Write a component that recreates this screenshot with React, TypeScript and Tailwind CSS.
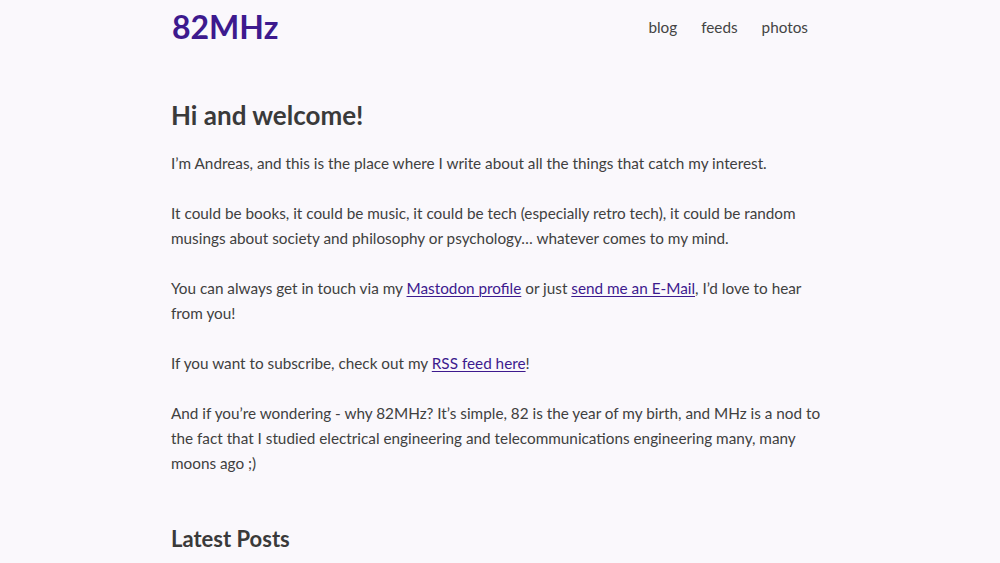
const links = "text-[#3d1a8e] underline underline-offset-2 decoration-1";

export default function App() {
  return (
    <div className="min-h-screen bg-[#faf8fc] text-[#404040] font-['Lato','Noto_Sans',sans-serif]">
      <header className="mx-auto flex max-w-[656px] items-center justify-between pt-[7px]">
        <a href="#" className="text-[32px] font-bold leading-[40px] text-[#3d1a8e]">
          82MHz
        </a>
        <nav className="flex gap-[24px] pr-[20px] text-[15.3px] text-[#444]">
          <a href="#">blog</a>
          <a href="#">feeds</a>
          <a href="#">photos</a>
        </nav>
      </header>

      <main className="mx-auto max-w-[658px] pt-[51px] text-[15.3px] leading-[25px]">
        <h1 className="mb-[19px] text-[26px] font-bold leading-[34px] text-[#3a3a3a]">Hi and welcome!</h1>
        <div className="flex flex-col gap-[25px]">
          <p>I’m Andreas, and this is the place where I write about all the things that catch my interest.</p>
          <p>
            It could be books, it could be music, it could be tech (especially retro tech), it could be random
            musings about society and philosophy or psychology… whatever comes to my mind.
          </p>
          <p>
            You can always get in touch via my <a href="#" className={links}>Mastodon profile</a> or just{" "}
            <a href="#" className={links}>send me an E-Mail</a>, I’d love to hear from you!
          </p>
          <p>
            If you want to subscribe, check out my <a href="#" className={links}>RSS feed here</a>!
          </p>
          <p>
            And if you’re wondering - why 82MHz? It’s simple, 82 is the year of my birth, and MHz is a nod to
            the fact that I studied electrical engineering and telecommunications engineering many, many moons
            ago ;)
          </p>
        </div>
        <h2 className="mt-[48px] text-[22px] font-bold leading-[30px] text-[#3a3a3a]">Latest Posts</h2>
      </main>
    </div>
  );
}
